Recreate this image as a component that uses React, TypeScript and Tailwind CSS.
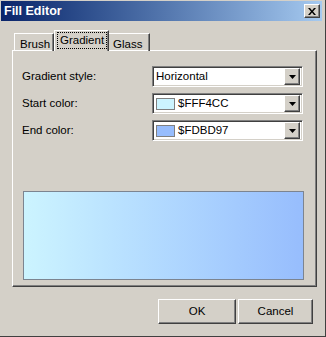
import React from 'react';

const raised =
  'border border-t-white border-l-white border-r-[#404040] border-b-[#404040] shadow-[inset_-1px_-1px_#808080]';
const sunken =
  'border border-t-[#808080] border-l-[#808080] border-r-white border-b-white shadow-[inset_1px_1px_#404040,inset_-1px_-1px_#d4d0c8]';

const Arrow: React.FC = () => (
  <div className={`w-[16px] h-[17px] bg-[#d4d0c8] flex items-center justify-center ${raised}`}>
    <svg width="7" height="4" viewBox="0 0 7 4">
      <path d="M0 0h7L3.5 4z" fill="#000" />
    </svg>
  </div>
);

const Select: React.FC<{ text: string; swatch?: string }> = ({ text, swatch }) => (
  <div className={`w-[151px] h-[21px] bg-white flex items-center pl-[3px] pr-[2px] ${sunken}`}>
    {swatch && (
      <div
        className="w-[19px] h-[12px] border border-[#808080] mr-[3px]"
        style={{ backgroundColor: swatch }}
      />
    )}
    <span className="flex-1 leading-none">{text}</span>
    <Arrow />
  </div>
);

const Row: React.FC<{ label: string; text: string; swatch?: string }> = ({ label, text, swatch }) => (
  <div className="flex items-center h-[21px]">
    <span className="w-[130px]">{label}</span>
    <Select text={text} swatch={swatch} />
  </div>
);

export default function App() {
  return (
    <div
      className="w-[326px] h-[337px] bg-[#d4d0c8] pl-px pt-px pr-[3px] border-r border-b border-[#404040] flex flex-col text-[11.5px] text-black"
      style={{ fontFamily: '"Liberation Sans", Arial, sans-serif' }}
    >
      <div className="h-[20px] bg-gradient-to-r from-[#0a246a] to-[#a6caf0] flex items-center pl-[3px] pr-[2px]">
        <span className="flex-1 text-white font-bold text-[12.5px]">Fill Editor</span>
        <div className={`w-[16px] h-[14px] bg-[#d4d0c8] flex items-center justify-center ${raised}`}>
          <svg width="8" height="7" viewBox="0 0 8 7">
            <path d="M0 0h2l2 2.5L6 0h2L5 3.5 8 7H6L4 4.5 2 7H0l3-3.5z" fill="#000" />
          </svg>
        </div>
      </div>

      <div className="pl-[11px] pt-[9px] flex flex-col">
        <div className="flex items-end pl-[2px] h-[21px] relative z-10 -mb-px">
          <div className="w-[40px] h-[18px] border-t border-l border-r border-t-white border-l-white border-r-[#404040] shadow-[inset_-1px_0_#808080] pl-[5px] pt-[2px]">
            Brush
          </div>
          <div className="w-[55px] h-[21px] bg-[#d4d0c8] border-t border-l border-r border-t-white border-l-white border-r-[#404040] shadow-[inset_-1px_0_#808080] pt-[1px] pl-[2px]">
            <div className="border border-dotted border-black px-[2px] h-[17px] w-[50px] flex items-center">
              Gradient
            </div>
          </div>
          <div className="w-[41px] h-[18px] border-t border-r border-t-white border-r-[#404040] shadow-[inset_-1px_0_#808080] pl-[4px] pt-[2px]">
            Glass
          </div>
        </div>

        <div className={`w-[305px] h-[237px] flex flex-col pl-[9px] pt-[15px] ${raised}`}>
          <div className="flex flex-col gap-[6px]">
            <Row label="Gradient style:" text="Horizontal" />
            <Row label="Start color:" text="$FFF4CC" swatch="#ccf4ff" />
            <Row label="End color:" text="$FDBD97" swatch="#97bdfd" />
          </div>
          <div className="mt-[50px] ml-[1px] w-[281px] h-[89px] border border-[#7c8490] bg-gradient-to-r from-[#ccf4ff] to-[#97bdfd]" />
        </div>

        <div className="flex justify-end gap-[2px] mt-[12px] pr-[9px]">
          <button className={`w-[78px] h-[25px] bg-[#d4d0c8] ${raised}`}>OK</button>
          <button className={`w-[75px] h-[25px] bg-[#d4d0c8] ${raised}`}>Cancel</button>
        </div>
      </div>
    </div>
  );
}
